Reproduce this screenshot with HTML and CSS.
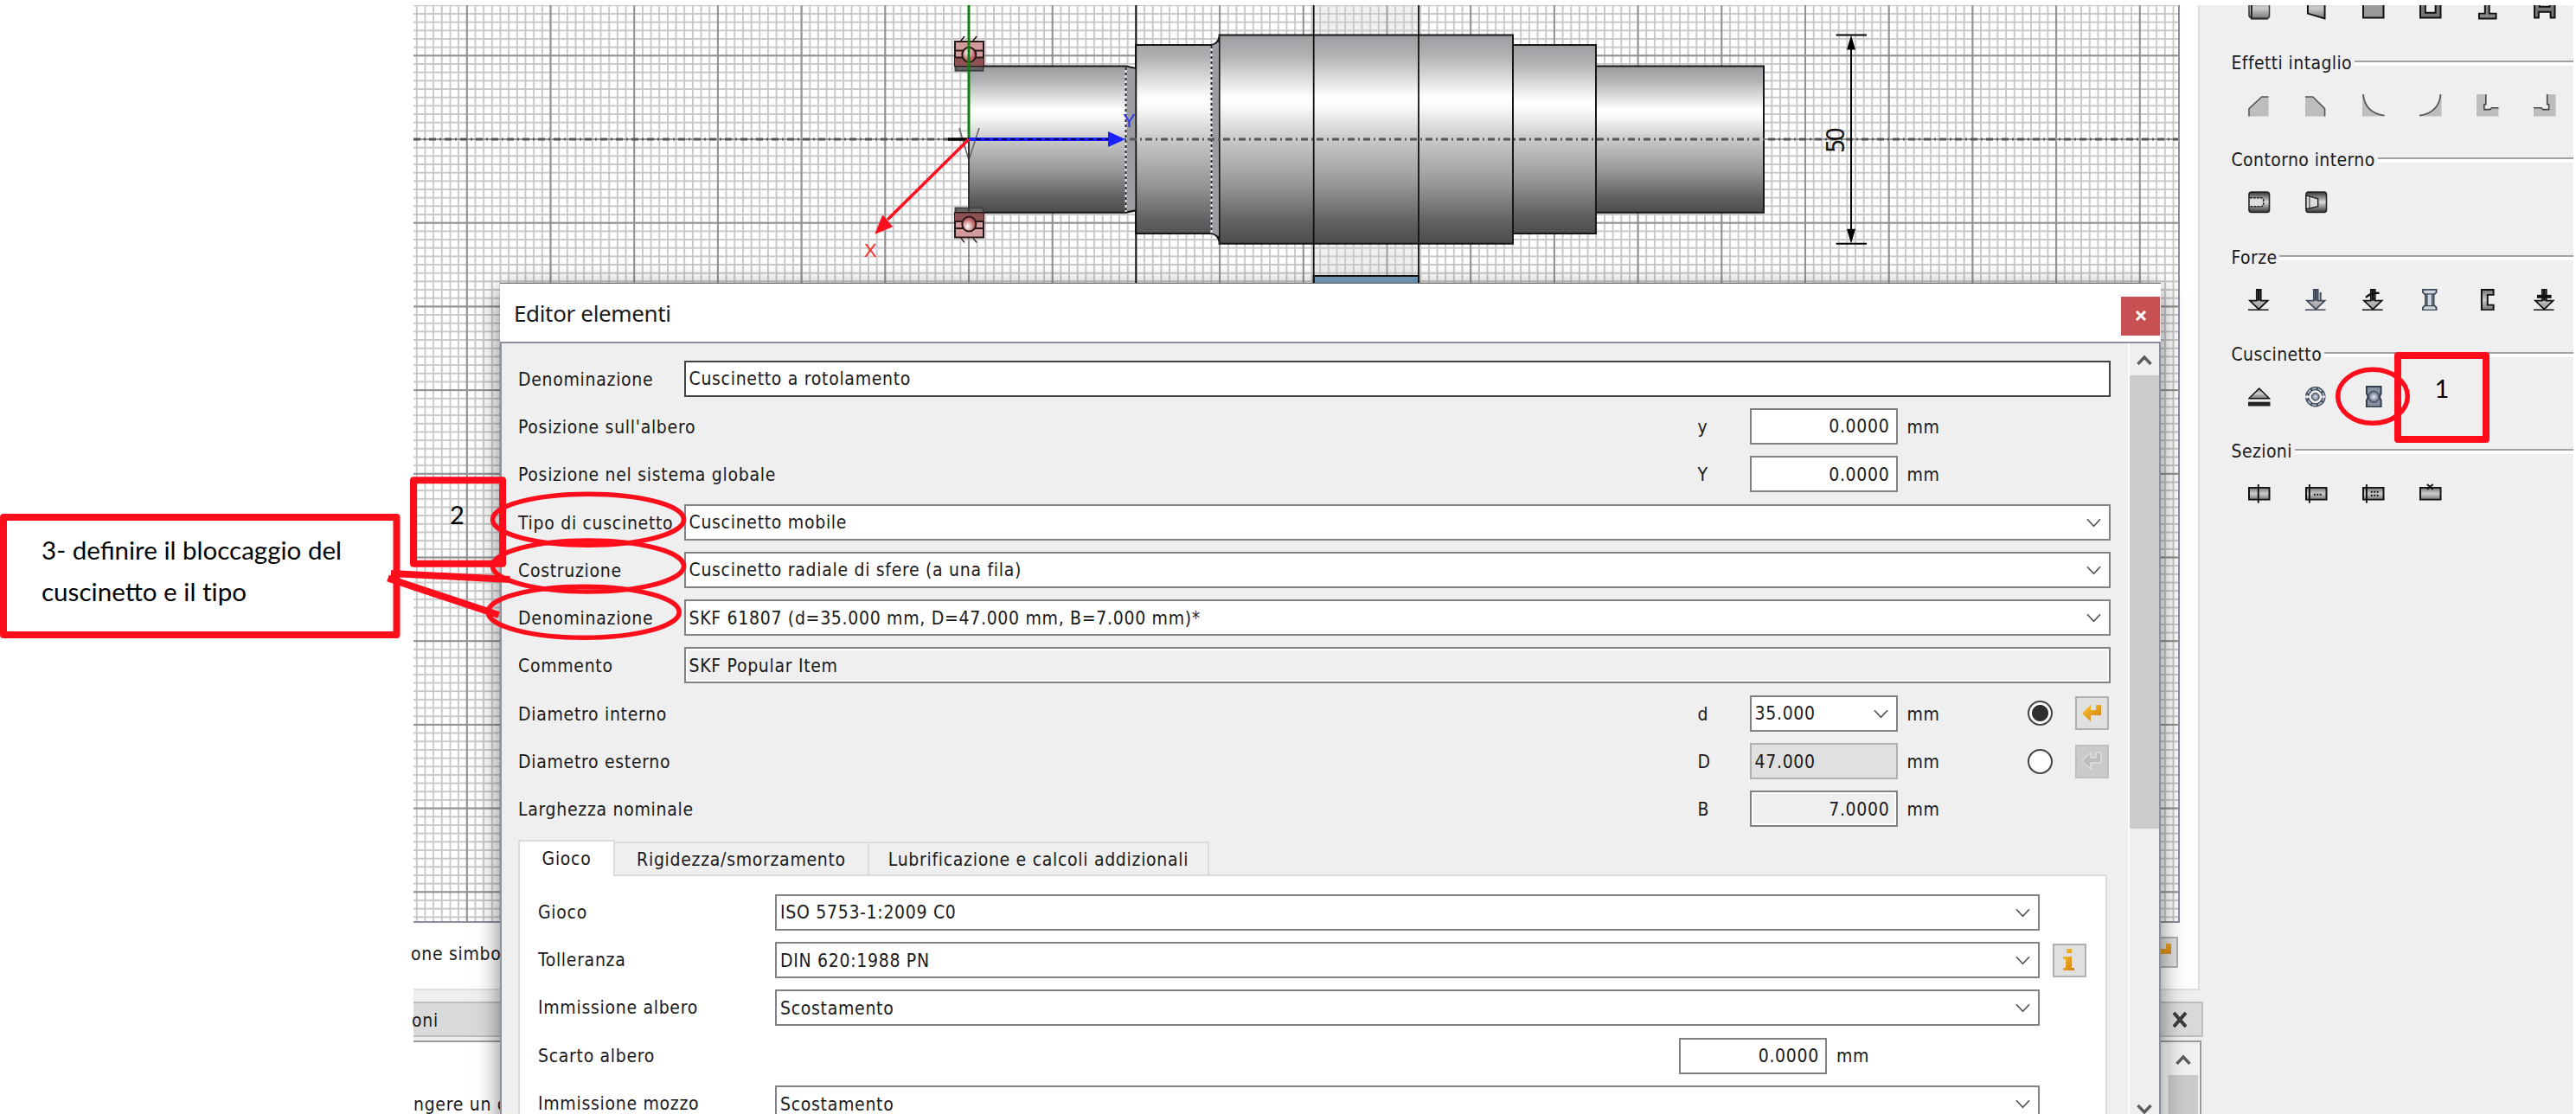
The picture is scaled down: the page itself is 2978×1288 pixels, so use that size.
FILE: index.html
```html
<!DOCTYPE html>
<html lang="it">
<head>
<meta charset="utf-8">
<title>Editor elementi</title>
<link rel="stylesheet" href="styles.css">
</head>
<body>
<svg class="defs" width="0" height="0">
  <defs>
    <linearGradient id="metal" x1="0" y1="0" x2="0" y2="1">
      <stop offset="0" stop-color="#9d9da1"/><stop offset=".1" stop-color="#b2b2b5"/><stop offset=".2" stop-color="#dadada"/><stop offset=".3" stop-color="#fff"/><stop offset=".34" stop-color="#fbfbfb"/><stop offset=".5" stop-color="#c9c9c9"/><stop offset=".72" stop-color="#969696"/><stop offset=".9" stop-color="#606062"/><stop offset="1" stop-color="#4c4c4e"/>
    </linearGradient>
    <linearGradient id="steel" x1="0" y1="0" x2="0" y2="1">
      <stop offset="0" stop-color="#333"/><stop offset=".5" stop-color="#ddd"/><stop offset="1" stop-color="#333"/>
    </linearGradient>
    <linearGradient id="bar" x1="0" y1="0" x2="0" y2="1">
      <stop offset="0" stop-color="#777"/><stop offset=".5" stop-color="#ccc"/><stop offset="1" stop-color="#777"/>
    </linearGradient>
    <linearGradient id="fade" x1="0" y1="0" x2="0" y2="1">
      <stop offset="0" stop-color="#eee"/><stop offset="1" stop-color="#999"/>
    </linearGradient>
    <linearGradient id="gold" x1="0" y1="0" x2="1" y2="1">
      <stop offset="0" stop-color="#ffc629"/><stop offset="1" stop-color="#cf7b12"/>
    </linearGradient>
    <radialGradient id="ball"><stop offset="0" stop-color="#e8eef8"/><stop offset="1" stop-color="#5b6577"/></radialGradient>
    <radialGradient id="redball" cx=".4" cy=".35"><stop offset="0" stop-color="#fff"/><stop offset="1" stop-color="#b95f5f"/></radialGradient>
    <pattern id="minor" x="1120" y="161" width="9.67" height="9.67" patternUnits="userSpaceOnUse">
      <path d="M0 0V9.67M9.67 0V9.67M0 0H9.67M0 9.67H9.67" stroke="#c8c8c8" stroke-width="1.9"/>
    </pattern>
    <pattern id="major" x="1120" y="161" width="96.7" height="96.7" patternUnits="userSpaceOnUse">
      <path d="M0 0V96.7M96.7 0V96.7M0 0H96.7M0 96.7H96.7" stroke="#929292" stroke-width="2"/>
    </pattern>
    <symbol id="chev" viewBox="0 0 18 11"><path d="M1 1l8 8.5L17 1" fill="none" stroke="#555" stroke-width="1.8"/></symbol>
    <symbol id="up" viewBox="0 0 18 12"><path d="M1.5 11L9 3l7.500 8" fill="none" stroke="#5c5c5c" stroke-width="3.400"/></symbol>
    <symbol id="enter" viewBox="0 0 24 22"><path d="M1 11L11 1v6h6V1h6v12H11v7z"/></symbol>
    <symbol id="arrow" viewBox="0 0 26 26"><path d="M10 1h5v13h8L12.500 24 2 14h8z" fill="url(#fade)" stroke="currentColor" stroke-width="1.800"/><path d="M12.500 1v13" stroke="currentColor" stroke-width="3"/><path d="M0 25h24" stroke="currentColor" stroke-width="2"/></symbol>
  </defs>
</svg>

<div class="page">
  <div class="margin"></div>
  <main class="workspace">
    <section class="view">
      <svg class="canvas" viewBox="478 6 2040 1059">
        <rect x="478" y="6" width="2042" height="1061" fill="#fff"/>
        <rect x="478" y="6" width="2042" height="1061" fill="url(#minor)"/>
        <rect x="478" y="6" width="2042" height="1061" fill="url(#major)"/>
        <rect x="1518.700" y="6" width="121.300" height="330" fill="#ccc" opacity=".3"/>
        <rect x="1518.700" y="319" width="121.300" height="20" fill="#7ba3c4" stroke="#111" stroke-width="2"/>
        <g stroke="#161616" stroke-width="2" fill="url(#metal)">
          <path d="M1120 76.500H1302l11 2.500V243.500l-11 2.200H1120z"/>
          <path d="M1313 52H1400.500q7-1 9-9V279q-2-8-9-9H1313z"/>
          <path d="M1409.600 40.500H1749V281.700H1409.600z"/>
          <path d="M1749 52H1845V270H1749z"/>
          <path d="M1845 76.500H2039V245.700H1845z"/>
        </g>
        <path d="M1302 78l11 2V242l-11 2z M1401 53l8-4V273l-8-4z" fill="#9b9ba1"/>
        <path d="M1301.500 78V245M1400.500 53V270" stroke="#eee" stroke-width="2"/>
        <path d="M1301.500 78V245M1400.500 53V270" stroke="#222" stroke-width="2" stroke-dasharray="3 3"/>
        <path d="M1313.300 6V336M1518.700 6V336M1640 6V336" stroke="#111" stroke-width="1.800"/>
        <path d="M478 161H2520" stroke="#555" stroke-width="3" stroke-dasharray="8 4 2 4"/>
        <g stroke="#000" stroke-width="2" fill="none"><path d="M2140 44V278M2122.600 40.500H2158M2122.600 281.700H2158"/><path d="M2140 40.500l5 17h-10zM2140 281.700l5-17h-10z" fill="#000" stroke="none"/></g>
        <text class="dim" transform="translate(2131.500 177) rotate(-90)" textLength="30">50</text>
        <g id="brg" stroke="#2a1717" stroke-width="2">
          <path d="M1104.500 76.300h32v5.500h-32z" fill="#666" stroke="#444"/>
          <path d="M1104 48h33V76.300h-33z" fill="#d39b9b"/><path d="M1104 66h33v10h-33z" fill="#8d5252" stroke="none"/>
          <path d="M1104 58.500h33M1104 66.500h33"/><ellipse cx="1120.300" cy="63.300" rx="8" ry="8.500" fill="url(#redball)"/>
          <path d="M1111 47l4-5M1125 47l4-5" stroke-width="1.500"/>
        </g>
        <use href="#brg" transform="matrix(1 0 0 -1 0 322.400)"/>
        <path d="M1109 148l11 37 12-37" fill="none" stroke="#666" stroke-width="1.600"/>
        <path d="M1120 161V246" stroke="#333" stroke-width="2"/>
        <path d="M1120 6V161" stroke="#118011" stroke-width="3"/>
        <path d="M1096 161h24" stroke="#000" stroke-width="3.500"/>
        <path d="M1120 161H1284" stroke="#1a22ff" stroke-width="4"/><path d="M1128 161H1284" stroke="#00006a" stroke-width="2" stroke-dasharray="6 4"/><path d="M1281 152v18l20-9z" fill="#1a22ff"/>
        <path d="M1120 161L1026 254" stroke="#ff1020" stroke-width="3.600"/><path d="M1012 270l8.500-21 11 13z" fill="#ff1020" stroke="#ff1020"/>
        <text class="axis" x="999" y="297" fill="#ff2a2a">X</text><text class="axis" x="1298" y="147" fill="#2f35e8">Y</text>
      </svg>
      <div class="viewbar"><span>one simbo</span><i class="btn small"><svg class="enter" width="24" height="22" fill="url(#gold)"><use href="#enter"/></svg></i></div>
    </section>
    <div class="dock">
      <div class="docktab"><span>oni</span><svg width="20" height="18"><path d="M3 1l14 16M17 1L3 17" stroke="#3a3a3a" stroke-width="4"/></svg></div>
      <div class="dockbody"><span>ngere un c</span><div class="dockscroll"><svg width="18" height="12"><use href="#up"/></svg><div class="thumb"></div></div></div>
    </div>
  </main>

  <aside class="palette">
    <div class="icons first">
      <svg viewBox="0 0 26 26"><rect x="1" y="0" width="24" height="25" rx="3" fill="url(#bar)"/><path d="M4 0v25h19" fill="none" stroke="#222" stroke-width="2"/><path d="M25 0v23l-2 2H4l-3-3V0" fill="none" stroke="#333" stroke-width="1.500"/></svg>
      <svg viewBox="0 0 26 26"><path d="M3 0h20v25L3 19z" fill="url(#bar)" stroke="#111" stroke-width="2"/></svg>
      <svg viewBox="0 0 26 26"><path d="M1 0h24v24H1z" fill="#999" stroke="#111" stroke-width="2"/></svg>
      <svg viewBox="0 0 26 26"><path d="M1 0h24v24H1z" fill="#777" stroke="#111" stroke-width="2"/><path d="M7 0h12v18H7z" fill="#eee" stroke="#111" stroke-width="2"/></svg>
      <svg viewBox="0 0 26 26"><path d="M10 0h5v19h8v6H3v-6h7z" fill="#888" stroke="#111" stroke-width="2"/></svg>
      <svg viewBox="0 0 26 26"><path d="M1 0h24v24h-5v-7H6v7H1z" fill="#777" stroke="#111" stroke-width="2"/><path d="M7 0v11h12V0" fill="#eee" stroke="#111" stroke-width="2"/></svg>
    </div>
    <section><h2>Effetti intaglio</h2><div class="icons">
      <svg viewBox="0 0 26 26"><path d="M1 26V17L16 3h8v23z" fill="#bdbdbd"/><path d="M1 26V17L16 3h8" fill="none" stroke="#555" stroke-width="1.600"/></svg>
      <svg viewBox="0 0 26 26"><path d="M0 3h9l14 14v9H0z" fill="#bdbdbd"/><path d="M0 3h9l14 14v9" fill="none" stroke="#555" stroke-width="1.600"/></svg>
      <svg viewBox="0 0 26 26"><path d="M1 1Q3 22 25 25v1H0V1z" fill="#bdbdbd"/><path d="M1 0Q3 22 26 25" fill="none" stroke="#555" stroke-width="1.800"/></svg>
      <svg viewBox="0 0 26 26"><path d="M25 1Q23 22 1 25v1h25V1z" fill="#bdbdbd"/><path d="M25 0Q23 22 0 25" fill="none" stroke="#555" stroke-width="1.800"/></svg>
      <svg viewBox="0 0 26 26"><path d="M0 0h11v12H9v6h7v-2h10v10H0z" fill="#bdbdbd"/><path d="M11 0v12H9v6h7l2-2h8" fill="none" stroke="#444" stroke-width="1.600"/></svg>
      <svg viewBox="0 0 26 26"><path d="M26 0H16v12h2v6h-7v-2H0v10h26z" fill="#bdbdbd"/><path d="M16 0v12h2v6h-7l-2-2H0" fill="none" stroke="#444" stroke-width="1.600"/></svg>
    </div></section>
    <section><h2>Contorno interno</h2><div class="icons">
      <svg viewBox="0 0 26 26"><rect x="1" y="1" width="24" height="24" rx="3" fill="url(#steel)" stroke="#222" stroke-width="1.600"/><path d="M2 8h14l2 2v6l-2 2H2z" fill="#ddd"/><path d="M2 8h14l2 2v6l-2 2H2" fill="none" stroke="#222" stroke-width="1.500" stroke-dasharray="3 1"/></svg>
      <svg viewBox="0 0 26 26"><rect x="1" y="1" width="24" height="24" rx="3" fill="url(#steel)" stroke="#222" stroke-width="1.600"/><path d="M1 5l14 4v9L1 21z" fill="#ddd" stroke="#222" stroke-width="1.500"/><path d="M5 6v14" stroke="#222"/></svg>
    </div></section>
    <section><h2>Forze</h2><div class="icons">
      <svg viewBox="0 0 26 26"><use href="#arrow"/></svg>
      <svg class="blue" viewBox="0 0 26 26"><use href="#arrow"/><path d="M18 4v10" stroke="#3d4757" stroke-width="2"/></svg>
      <svg viewBox="0 0 26 26"><use href="#arrow"/><path d="M4 10q7-6 16-5" fill="none" stroke="#111" stroke-width="2.500"/></svg>
      <svg viewBox="0 0 26 26"><path d="M4 1h16v3l-3 3v12l3 3v3H4v-3l3-3V7L4 4z" fill="#cfd6e0" stroke="#3d4757" stroke-width="1.800"/><path d="M9 6v14M15 6v14M7 6h10M7 20h10" stroke="#3d4757" stroke-width="1.500"/></svg>
      <svg viewBox="0 0 26 26"><path d="M6 1h14v6h-7v12h7v6H6z" fill="url(#bar)" stroke="#111" stroke-width="2"/></svg>
      <svg viewBox="0 0 26 26"><use href="#arrow"/><path d="M4 9h17" stroke="#111" stroke-width="4"/></svg>
    </div></section>
    <section><h2>Cuscinetto</h2><div class="icons">
      <svg viewBox="0 0 26 26"><path d="M1 15L13 3l12 12z" fill="url(#bar)" stroke="#111" stroke-width="1.500"/><path d="M0 21.500h26" stroke="#222" stroke-width="5"/></svg>
      <svg viewBox="0 0 26 26"><circle cx="12" cy="13" r="9.800" fill="none" stroke="#3d4757" stroke-width="4.500"/><circle cx="12" cy="13" r="9.800" fill="none" stroke="#a5b0c0" stroke-width="2" stroke-dasharray="5 2"/><path d="M0 13h5M19 13h5" stroke="#efefef" stroke-width="2"/><circle cx="12" cy="13" r="4.500" fill="url(#ball)" stroke="#3d4757"/></svg>
      <svg viewBox="0 0 26 26"><path d="M5 1h17v8q-3 4 0 8v8H5v-8q3-4 0-8z" fill="#8590a2" stroke="#333c4c" stroke-width="2"/><circle cx="13.500" cy="13" r="6.500" fill="url(#ball)" stroke="#333c4c"/></svg>
    </div></section>
    <section><h2>Sezioni</h2><div class="icons">
      <svg viewBox="0 0 26 26"><path d="M1 6h24v14H1z" fill="url(#bar)" stroke="#111" stroke-width="2"/><path d="M12 2v22" stroke="#111" stroke-width="2"/></svg>
      <svg viewBox="0 0 26 26"><path d="M1 6h24v14H1z" fill="url(#bar)" stroke="#111" stroke-width="2"/><path d="M5 2v22" stroke="#111" stroke-width="2"/><path d="M10 14h9" stroke="#111" stroke-width="2" stroke-dasharray="2 1.500"/></svg>
      <svg viewBox="0 0 26 26"><path d="M1 6h24v14H1z" fill="url(#bar)" stroke="#111" stroke-width="2"/><path d="M5 2v22" stroke="#111" stroke-width="2"/><path d="M10 11h9M10 15h9" stroke="#111" stroke-width="2" stroke-dasharray="2 1.500"/></svg>
      <svg viewBox="0 0 26 26"><path d="M1 6h24v14H1z" fill="url(#bar)" stroke="#111" stroke-width="2"/><path d="M9 2l7 6M16 2L9 8" stroke="#111" stroke-width="2"/></svg>
    </div></section>
  </aside>
</div>

<div class="dialog">
  <header><h1>Editor elementi</h1><button class="close"><svg width="14" height="12"><path d="M2 1l10 10M12 1L2 11" stroke="#fff" stroke-width="3"/></svg></button></header>
  <div class="dialogbody">
    <div class="form">
      <div class="row"><label>Denominazione</label><div class="field focus">Cuscinetto a rotolamento</div></div>
      <div class="nrow"><label>Posizione sull'albero</label><span>y</span><div class="field num">0.0000</div><span class="unit">mm</span></div>
      <div class="nrow"><label>Posizione nel sistema globale</label><span>Y</span><div class="field num">0.0000</div><span class="unit">mm</span></div>
      <div class="row"><label>Tipo di cuscinetto</label><div class="field combo">Cuscinetto mobile<svg width="17" height="11"><use href="#chev"/></svg></div></div>
      <div class="row"><label>Costruzione</label><div class="field combo">Cuscinetto radiale di sfere (a una fila)<svg width="17" height="11"><use href="#chev"/></svg></div></div>
      <div class="row"><label>Denominazione</label><div class="field combo">SKF 61807 (d=35.000 mm, D=47.000 mm, B=7.000 mm)*<svg width="17" height="11"><use href="#chev"/></svg></div></div>
      <div class="row"><label>Commento</label><div class="field ro">SKF Popular Item</div></div>
      <div class="nrow"><label>Diametro interno</label><span>d</span><div class="field combo">35.000<svg width="17" height="11"><use href="#chev"/></svg></div><span class="unit">mm</span><i class="radio on"></i><i class="btn"><svg width="24" height="22" fill="url(#gold)"><use href="#enter"/></svg></i></div>
      <div class="nrow"><label>Diametro esterno</label><span>D</span><div class="field dis">47.000</div><span class="unit">mm</span><i class="radio"></i><i class="btn off"><svg width="24" height="22" fill="#bdbdbd" stroke="#f0f0f0" stroke-width="1"><use href="#enter"/></svg></i></div>
      <div class="nrow"><label>Larghezza nominale</label><span>B</span><div class="field num ro">7.0000</div><span class="unit">mm</span></div>
      <div class="tabs"><div class="tab active">Gioco</div><div class="tab t2">Rigidezza/smorzamento</div><div class="tab t3">Lubrificazione e calcoli addizionali</div></div>
      <div class="panel">
        <div class="prow"><label>Gioco</label><div class="field combo">ISO 5753-1:2009 C0<svg width="17" height="11"><use href="#chev"/></svg></div></div>
        <div class="prow"><label>Tolleranza</label><div class="field combo">DIN 620:1988 PN<svg width="17" height="11"><use href="#chev"/></svg></div><i class="btn"><svg width="16" height="26" fill="url(#gold)"><path d="M5 0h6v5H5zM1 9h10v13h3v3H1v-3h3V12H1z"/></svg></i></div>
        <div class="prow"><label>Immissione albero</label><div class="field combo">Scostamento<svg width="17" height="11"><use href="#chev"/></svg></div></div>
        <div class="prow scarto"><label>Scarto albero</label><div class="field num">0.0000</div><span class="unit">mm</span></div>
        <div class="prow"><label>Immissione mozzo</label><div class="field combo">Scostamento<svg width="17" height="11"><use href="#chev"/></svg></div></div>
      </div>
    </div>
    <div class="scroll"><svg width="18" height="12"><use href="#up"/></svg><div class="thumb"></div><svg class="down" width="18" height="12"><use href="#up"/></svg></div>
  </div>
</div>

<svg class="notes" viewBox="0 0 2978 1288">
  <g fill="none" stroke="#ff0d1b">
    <g stroke-width="8" stroke-linejoin="round">
      <rect x="4" y="598" width="454.500" height="136"/>
      <rect x="478" y="555.300" width="103" height="96.500"/>
      <rect x="2772" y="411" width="102" height="97"/>
      <path d="M452 663L589.500 670M448.500 668.500L576.500 711"/>
    </g>
    <g stroke-width="5.500">
      <ellipse cx="680" cy="600.700" rx="110.500" ry="29.500"/>
      <ellipse cx="680" cy="654.500" rx="110.500" ry="29.500"/>
      <ellipse cx="674.700" cy="707.700" rx="110.500" ry="29.500"/>
      <ellipse cx="2743" cy="458.300" rx="40.300" ry="31"/>
    </g>
  </g>
  <g class="notetext">
    <text x="48" y="647" textLength="347" lengthAdjust="spacingAndGlyphs">3- definire il bloccaggio del</text>
    <text x="48" y="695.300" textLength="237" lengthAdjust="spacingAndGlyphs">cuscinetto e il <tspan class="nolig">tipo</tspan></text>
    <text x="520" y="605.500">2</text>
    <text x="2814.500" y="460">1</text>
  </g>
</svg>
</body>
</html>
```
FILE: styles.css
```css
* { box-sizing: border-box; }
body {
  margin: 0; width: 2978px; height: 1288px; overflow: hidden; position: relative; background: #fff; color: #1a1a1a;
  font: 21px/26px "DejaVu Sans Condensed", "DejaVu Sans", sans-serif; font-stretch: condensed; letter-spacing: 0.7px;
}
.defs { position: absolute; }
svg { display: block; }
.page { display: flex; height: 1288px; padding: 6px 3px 0 0; }
.margin { width: 478px; flex: none; }
.workspace { width: 2071px; flex: none; background: #efefef; display: flex; flex-direction: column; }
.view { width: 2065px; height: 1139px; flex: none; background: #fff; border-right: 2px solid #ddd; border-bottom: 2px solid #ddd; }
.canvas { width: 2042px; height: 1061px; border-right: 2px solid #8a8f9c; border-bottom: 2px solid #8a8f9c; }
.axis { font-size: 22px; font-family: "Liberation Sans", sans-serif; letter-spacing: 0; }
.dim { font-size: 29px; letter-spacing: 0; fill: #111; }
.viewbar { display: flex; justify-content: space-between; width: 2040px; padding-top: 16px; }
.viewbar span { padding-top: 7px; margin-left: -3px; }
.dock { flex: 1; min-height: 0; padding-top: 13px; display: flex; flex-direction: column; }
.docktab { height: 41px; width: 2069px; flex: none; background: #dadada; border: 2px solid #bdbdbd; border-left: 0; display: flex; align-items: center; justify-content: space-between; padding-right: 15px; }
.docktab span { padding-top: 2px; margin-left: -2px; }
.dockbody { margin-top: 4px; flex: 1; min-height: 0; width: 2067px; background: #fff; border: 2px solid #9a9a9a; border-left: 0; border-bottom: 0; display: flex; justify-content: space-between; overflow: hidden; }
.dockbody > span { padding-top: 59px; }
.dockscroll { width: 37px; background: #f0f0f0; display: flex; flex-direction: column; align-items: center; padding-top: 14px; margin-right: 1px; }
.dockscroll .thumb { margin-top: 12px; width: 34px; flex: 1; background: #cbcbcb; }

.palette { flex: 1; background: #efefef; overflow: hidden; }
.palette section { height: 112.3px; }
.palette h2 { margin: 0; padding-left: 30.5px; font: inherit; line-height: 24px; height: 24px; display: flex; align-items: center; gap: 3px; letter-spacing: 0.4px; }
.palette h2::after { content: ""; flex: 1; height: 4px; border-top: 2px solid #a2a2a2; background: #fff; }
.icons { display: grid; grid-template-columns: repeat(6, 66.1px); padding: 24px 0 0 50px; }
.icons svg { width: 25.5px; height: 25.5px; overflow: hidden; color: #111; }
.icons .blue { color: #3d4757; }
.icons.first { height: 55px; padding-top: 0; }
.icons.first svg { margin-top: -9px; }

.dialog { position: absolute; left: 578px; top: 328px; width: 1920px; height: 980px; background: #efefef; box-shadow: 0 6px 26px rgba(0,0,0,.5), 0 -1px 0 #777; display: flex; flex-direction: column; }
.dialog header { height: 67px; flex: none; background: #fff; display: flex; justify-content: space-between; align-items: center; padding: 0 1px 0 16px; }
h1 { margin: 0; font: 26px/34px "Noto Sans", sans-serif; letter-spacing: -.35px; }
.close { width: 45px; height: 45px; margin-top: 7px; border: 0; padding: 0; background: #c75052; display: flex; align-items: center; justify-content: center; }
.dialogbody { flex: 1; border: 2px solid #8b919c; display: flex; justify-content: space-between; min-height: 0; }
.form { width: 1860px; padding: 19.7px 0 0 19px; display: flex; flex-direction: column; gap: 13.3px; }
.row { display: flex; width: 1841px; height: 42px; align-items: center; flex: none; }
.row label { width: 191.500px; }
.row label, .nrow label, .nrow > span { padding-top: 2px; }
.nrow { display: grid; width: 1841px; height: 42px; flex: none; align-items: center; grid-template-columns: 1363.500px 60px 171px 150px 55px 41px; }
.nrow .unit, .unit { padding-left: 11px; }
.field { height: 42px; flex: 1; background: #fff; border: 2px solid #828282; padding: 1px 9px 0 4px; display: flex; align-items: center; white-space: nowrap; }
.field.focus { border-color: #444; }
.combo { justify-content: space-between; }
.num { justify-content: flex-end; padding-right: 7px; }
.ro { background: #efefef; box-shadow: inset 0 0 0 2px #fff; }
.dis { background: #e0e0e0; border-color: #b0b0b0; }
.radio { width: 29px; height: 29px; border-radius: 50%; border: 2px solid #444; background: #fff; display: block; }
.radio.on { background: radial-gradient(circle, #2e2e2e 9px, #fff 10px); }
.btn { width: 39px; height: 39px; border: 2px solid #b0b0b0; background: #e0e0e0; display: flex; align-items: center; justify-content: center; }
.btn.off { background: #cacaca; border-color: #bfbfbf; }
.btn.small { height: 36px; }
.tabs { display: flex; align-items: flex-end; height: 41px; flex: none; }
.tab { height: 38px; border: 2px solid #dcdcdc; border-left: 0; border-bottom: 0; display: flex; align-items: center; justify-content: center; padding-top: 2px; white-space: nowrap; }
.tab.active { width: 112px; height: 42px; border-left: 2px solid #dcdcdc; background: #fff; padding-top: 0; position: relative; top: 2px; z-index: 1; }
.t2 { width: 294px; } .t3 { width: 393px; }
.panel { margin-top: -13.300px; width: 1837px; flex: 1; background: #fff; border: 2px solid #dcdcdc; padding: 21.200px 0 0 21px; display: flex; flex-direction: column; gap: 13.300px; }
.prow { display: flex; width: 1790px; height: 42px; align-items: center; flex: none; }
.prow label { width: 274px; }
.prow .field { flex: none; width: 1461.500px; }
.prow .btn { margin-left: 15px; }
.prow.scarto label { width: 1319px; }
.prow.scarto .field { width: 171px; }
.scroll { width: 36px; border-left: 2px solid #fff; display: flex; flex-direction: column; align-items: center; padding: 13px 0 15px; }
.scroll svg { flex: none; }
.scroll .thumb { margin-top: 12px; width: 34px; height: 524px; background: #cbcbcb; flex: none; }
.scroll .down { transform: scaleY(-1); margin-top: 319px; }

.notes { position: absolute; left: 0; top: 0; width: 2978px; height: 1288px; }
.notetext { font: 29px Lato, sans-serif; letter-spacing: 0; fill: #000; }
.nolig { font-variant-ligatures: none; }
```
